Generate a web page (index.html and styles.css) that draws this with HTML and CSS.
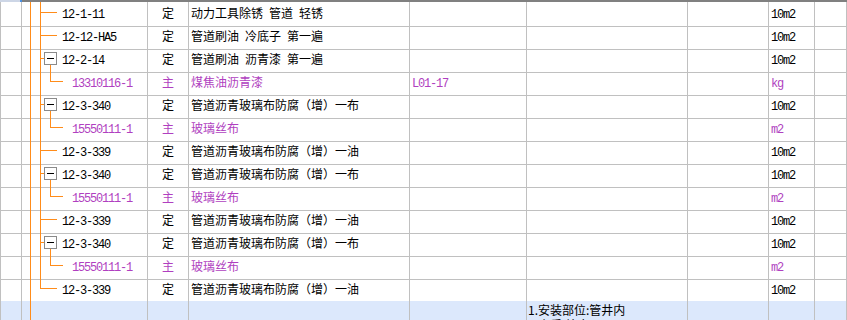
FILE: index.html
```html
<!DOCTYPE html>
<html lang="zh-CN">
<head>
<meta charset="utf-8">
<title>清单定额</title>
<link rel="stylesheet" href="styles.css">
</head>
<body>
<div class="topbar"><span class="tb-l"></span><span class="tb-m"></span><span class="tb-r"></span></div>
<div class="grid">
  <div class="row">
    <div class="c"></div>
    <div class="c tree"><i class="v1"></i><i class="v2"></i><i class="br"></i><span class="code l2">12-1-11</span></div>
    <div class="c type">定</div>
    <div class="c name">动力工具除锈 管道 轻锈</div>
    <div class="c"></div><div class="c"></div><div class="c"></div>
    <div class="c unit"><span class="asc">10m2</span></div>
    <div class="c"></div>
  </div>
  <div class="row">
    <div class="c"></div>
    <div class="c tree"><i class="v1"></i><i class="v2"></i><i class="br"></i><span class="code l2">12-12-HA5</span></div>
    <div class="c type">定</div>
    <div class="c name">管道刷油 冷底子 第一遍</div>
    <div class="c"></div><div class="c"></div><div class="c"></div>
    <div class="c unit"><span class="asc">10m2</span></div>
    <div class="c"></div>
  </div>
  <div class="row">
    <div class="c"></div>
    <div class="c tree"><i class="v1"></i><i class="v2"></i><i class="stub"></i><i class="box"></i><i class="down"></i><span class="code l2">12-2-14</span></div>
    <div class="c type">定</div>
    <div class="c name">管道刷油 沥青漆 第一遍</div>
    <div class="c"></div><div class="c"></div><div class="c"></div>
    <div class="c unit"><span class="asc">10m2</span></div>
    <div class="c"></div>
  </div>
  <div class="row sub">
    <div class="c"></div>
    <div class="c tree"><i class="v1"></i><i class="v2"></i><i class="up"></i><i class="cbr"></i><span class="code l3">13310116-1</span></div>
    <div class="c type">主</div>
    <div class="c name">煤焦油沥青漆</div>
    <div class="c spec"><span class="asc">L01-17</span></div>
    <div class="c"></div><div class="c"></div>
    <div class="c unit"><span class="asc">kg</span></div>
    <div class="c"></div>
  </div>
  <div class="row">
    <div class="c"></div>
    <div class="c tree"><i class="v1"></i><i class="v2"></i><i class="stub"></i><i class="box"></i><i class="down"></i><span class="code l2">12-3-340</span></div>
    <div class="c type">定</div>
    <div class="c name">管道沥青玻璃布防腐（增）一布</div>
    <div class="c"></div><div class="c"></div><div class="c"></div>
    <div class="c unit"><span class="asc">10m2</span></div>
    <div class="c"></div>
  </div>
  <div class="row sub">
    <div class="c"></div>
    <div class="c tree"><i class="v1"></i><i class="v2"></i><i class="up"></i><i class="cbr"></i><span class="code l3">15550111-1</span></div>
    <div class="c type">主</div>
    <div class="c name">玻璃丝布</div>
    <div class="c"></div><div class="c"></div><div class="c"></div>
    <div class="c unit"><span class="asc">m2</span></div>
    <div class="c"></div>
  </div>
  <div class="row">
    <div class="c"></div>
    <div class="c tree"><i class="v1"></i><i class="v2"></i><i class="br"></i><span class="code l2">12-3-339</span></div>
    <div class="c type">定</div>
    <div class="c name">管道沥青玻璃布防腐（增）一油</div>
    <div class="c"></div><div class="c"></div><div class="c"></div>
    <div class="c unit"><span class="asc">10m2</span></div>
    <div class="c"></div>
  </div>
  <div class="row">
    <div class="c"></div>
    <div class="c tree"><i class="v1"></i><i class="v2"></i><i class="stub"></i><i class="box"></i><i class="down"></i><span class="code l2">12-3-340</span></div>
    <div class="c type">定</div>
    <div class="c name">管道沥青玻璃布防腐（增）一布</div>
    <div class="c"></div><div class="c"></div><div class="c"></div>
    <div class="c unit"><span class="asc">10m2</span></div>
    <div class="c"></div>
  </div>
  <div class="row sub">
    <div class="c"></div>
    <div class="c tree"><i class="v1"></i><i class="v2"></i><i class="up"></i><i class="cbr"></i><span class="code l3">15550111-1</span></div>
    <div class="c type">主</div>
    <div class="c name">玻璃丝布</div>
    <div class="c"></div><div class="c"></div><div class="c"></div>
    <div class="c unit"><span class="asc">m2</span></div>
    <div class="c"></div>
  </div>
  <div class="row">
    <div class="c"></div>
    <div class="c tree"><i class="v1"></i><i class="v2"></i><i class="br"></i><span class="code l2">12-3-339</span></div>
    <div class="c type">定</div>
    <div class="c name">管道沥青玻璃布防腐（增）一油</div>
    <div class="c"></div><div class="c"></div><div class="c"></div>
    <div class="c unit"><span class="asc">10m2</span></div>
    <div class="c"></div>
  </div>
  <div class="row">
    <div class="c"></div>
    <div class="c tree"><i class="v1"></i><i class="v2"></i><i class="stub"></i><i class="box"></i><i class="down"></i><span class="code l2">12-3-340</span></div>
    <div class="c type">定</div>
    <div class="c name">管道沥青玻璃布防腐（增）一布</div>
    <div class="c"></div><div class="c"></div><div class="c"></div>
    <div class="c unit"><span class="asc">10m2</span></div>
    <div class="c"></div>
  </div>
  <div class="row sub">
    <div class="c"></div>
    <div class="c tree"><i class="v1"></i><i class="v2"></i><i class="up"></i><i class="cbr"></i><span class="code l3">15550111-1</span></div>
    <div class="c type">主</div>
    <div class="c name">玻璃丝布</div>
    <div class="c"></div><div class="c"></div><div class="c"></div>
    <div class="c unit"><span class="asc">m2</span></div>
    <div class="c"></div>
  </div>
  <div class="row">
    <div class="c"></div>
    <div class="c tree"><i class="v1"></i><i class="v2 end"></i><i class="br"></i><span class="code l2">12-3-339</span></div>
    <div class="c type">定</div>
    <div class="c name">管道沥青玻璃布防腐（增）一油</div>
    <div class="c"></div><div class="c"></div><div class="c"></div>
    <div class="c unit"><span class="asc">10m2</span></div>
    <div class="c"></div>
  </div>
  <div class="row sel">
    <div class="c"></div>
    <div class="c tree"><i class="v1"></i></div>
    <div class="c"></div>
    <div class="c"></div>
    <div class="c"></div>
    <div class="c feat"><div class="fl">1.安装部位:管井内</div><div class="fl">2.介质:给水</div></div>
    <div class="c"></div>
    <div class="c"></div>
    <div class="c"></div>
  </div>
</div>
</body>
</html>
```

FILE: styles.css
```css
html, body {
  margin: 0;
  padding: 0;
  background: #ffffff;
  overflow: hidden;
}
body {
  width: 847px;
  height: 320px;
  font-family: "Noto Sans CJK SC", sans-serif;
  font-size: 12px;
  color: #000000;
}
.topbar {
  display: flex;
  height: 2px;
}
.tb-l { width: 20px; background: #cdd6e6; }
.tb-m { width: 2px; background: #4a90e2; }
.tb-r { flex: 1; background: #808080; }

.grid {
  border-left: 1px solid #c0c0c0;
}
.row {
  display: grid;
  grid-template-columns: 21px 126px 41px 221px 117px 161px 81px 46px 1fr;
  height: 23px;
}
.c {
  box-sizing: border-box;
  border-right: 1px solid #c0c0c0;
  border-bottom: 1px solid #c0c0c0;
  line-height: 22px;
  white-space: nowrap;
  position: relative;
  min-width: 0;
}
.type { text-align: center; }
.name { padding-left: 2px; word-spacing: 3.3px; }
.spec { padding-left: 2px; }
.unit { padding-left: 2px; }
.asc, .code {
  font-family: "Liberation Mono", monospace;
  font-size: 12px;
  letter-spacing: -1.2px;
}
.code.l2 { padding-left: 40px; }
.code.l3 { padding-left: 50px; }
.sub .c { color: #b03fc0; }

/* tree connectors */
.tree i {
  position: absolute;
  display: block;
  background: #ff8c1a;
}
.tree .v1 { left: 8px; top: 0; bottom: -1px; width: 1px; }
.tree .v2 { left: 18px; top: 0; bottom: -1px; width: 1px; }
.tree .v2.end { bottom: auto; height: 11px; }
.tree .br { left: 18px; top: 10px; width: 17px; height: 1px; }
.tree .stub { left: 18px; top: 10px; width: 4px; height: 1px; }
.tree .down { left: 28px; top: 17px; bottom: -1px; width: 1px; }
.tree .up { left: 28px; top: 0; height: 11px; width: 1px; }
.tree .cbr { left: 28px; top: 10px; width: 13px; height: 1px; }
.tree .box {
  left: 22px;
  top: 4px;
  width: 13px;
  height: 13px;
  box-sizing: border-box;
  border: 1px solid #8a8a8a;
  background: #ffffff;
}
.tree .box::after {
  content: "";
  position: absolute;
  left: 2px;
  top: 5px;
  width: 7px;
  height: 1px;
  background: #000000;
}

.sel { height: 19px; }
.sel .c {
  background: #dce8fc;
  border-bottom: none;
  overflow: hidden;
}
.sel .tree { overflow: visible; }
.feat {
  padding-top: 1px;
  padding-left: 1px;
}
.fl {
  height: 15px;
  line-height: 15px;
}
```
